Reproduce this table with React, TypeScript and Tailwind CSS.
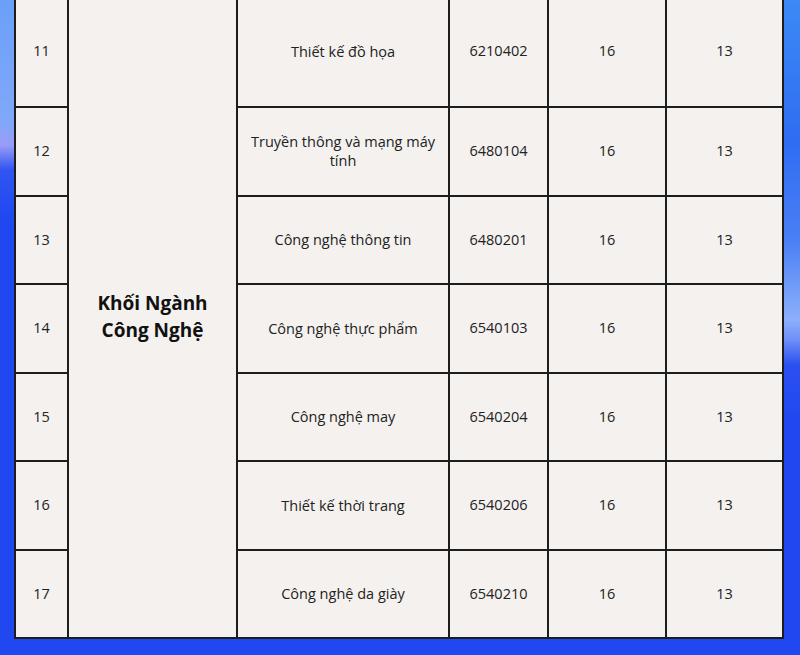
const rows = [
  { stt: "11", name: "Thiết kế đồ họa", code: "6210402", a: "16", b: "13" },
  { stt: "12", name: "Truyền thông và mạng máy tính", code: "6480104", a: "16", b: "13" },
  { stt: "13", name: "Công nghệ thông tin", code: "6480201", a: "16", b: "13" },
  { stt: "14", name: "Công nghệ thực phẩm", code: "6540103", a: "16", b: "13" },
  { stt: "15", name: "Công nghệ may", code: "6540204", a: "16", b: "13" },
  { stt: "16", name: "Thiết kế thời trang", code: "6540206", a: "16", b: "13" },
  { stt: "17", name: "Công nghệ da giày", code: "6540210", a: "16", b: "13" },
]

const cell = "border-2 border-[#1d1d1d] text-center align-middle"

export default function App() {
  return (
    <div
      className="flex h-[655px] w-[800px] overflow-hidden bg-[#2148f0] text-[14.5px] text-[#222]"
      style={{ fontFamily: '"Open Sans", "Noto Sans", sans-serif' }}
    >
      <div className="w-[14px] shrink-0 bg-[linear-gradient(to_bottom,#6aa0f8_0px,#80a8f9_120px,#9a9cf6_145px,#2f55f1_170px,#2148f0_220px)]" />
      <div className="-mt-[6px] w-[770px] shrink-0">
        <table className="w-[768px] table-fixed border-collapse bg-[#f4f1ef]">
          <colgroup>
            <col className="w-[53px]" />
            <col className="w-[169px]" />
            <col className="w-[212px]" />
            <col className="w-[99px]" />
            <col className="w-[118px]" />
            <col className="w-[117px]" />
          </colgroup>
          <tbody>
            {rows.map((r, i) => (
              <tr key={r.stt} className={i === 0 ? "h-[112px]" : "h-[88.5px]"}>
                <td className={cell}>{r.stt}</td>
                {i === 0 && (
                  <td
                    rowSpan={rows.length}
                    className={`${cell} text-[19px] leading-[27px] font-bold text-[#111]`}
                  >
                    Khối Ngành
                    <br />
                    Công Nghệ
                  </td>
                )}
                <td className={`${cell} px-[10px] leading-[19px]`}>{r.name}</td>
                <td className={cell}>{r.code}</td>
                <td className={cell}>{r.a}</td>
                <td className={cell}>{r.b}</td>
              </tr>
            ))}
          </tbody>
        </table>
      </div>
      <div className="w-[16px] shrink-0 bg-[linear-gradient(to_bottom,#3c8af5_0px,#2f6df3_140px,#4a7ff5_240px,#8cb0fa_320px,#6f8ef7_340px,#2a50f0_365px,#2148f0_420px)]" />
    </div>
  )
}
